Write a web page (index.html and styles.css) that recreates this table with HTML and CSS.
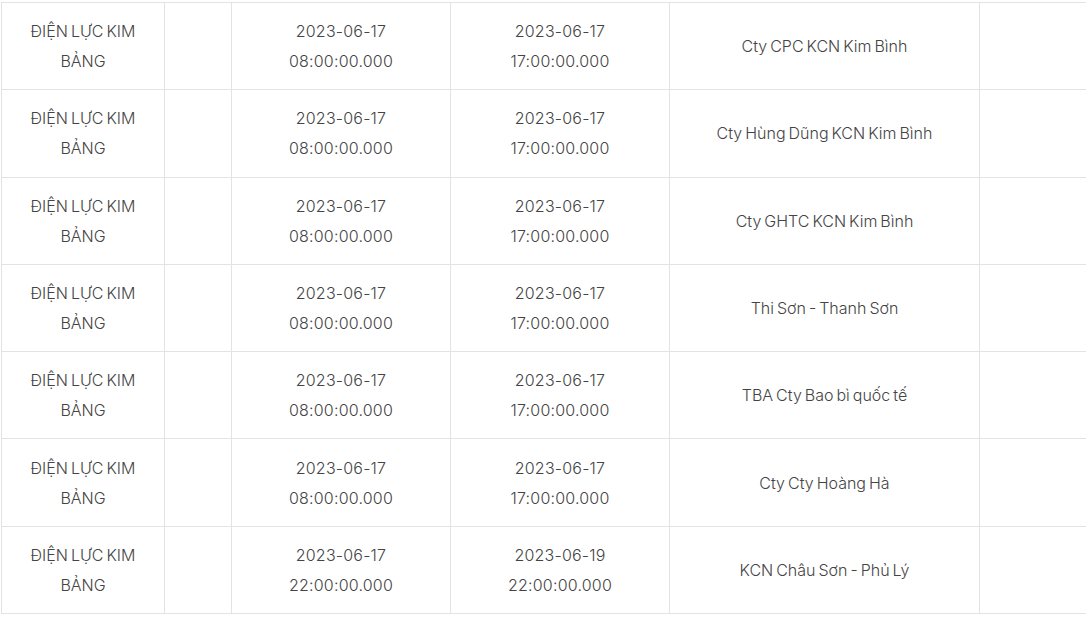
FILE: index.html
```html
<!DOCTYPE html>
<html lang="vi">
<head>
<meta charset="utf-8">
<link rel="stylesheet" href="styles.css">
</head>
<body>
<div class="wrap">
<table class="outage">
  <colgroup>
    <col class="c1"><col class="c2"><col class="c3"><col class="c4"><col class="c5"><col class="c6">
  </colgroup>
  <tbody>
    <tr><td>ĐIỆN LỰC KIM<br>BẢNG</td><td></td><td class="dt">2023-06-17<br>08:00:00.000</td><td class="dt">2023-06-17<br>17:00:00.000</td><td>Cty CPC KCN Kim Bình</td><td></td></tr>
    <tr><td>ĐIỆN LỰC KIM<br>BẢNG</td><td></td><td class="dt">2023-06-17<br>08:00:00.000</td><td class="dt">2023-06-17<br>17:00:00.000</td><td>Cty Hùng Dũng KCN Kim Bình</td><td></td></tr>
    <tr><td>ĐIỆN LỰC KIM<br>BẢNG</td><td></td><td class="dt">2023-06-17<br>08:00:00.000</td><td class="dt">2023-06-17<br>17:00:00.000</td><td>Cty GHTC KCN Kim Bình</td><td></td></tr>
    <tr><td>ĐIỆN LỰC KIM<br>BẢNG</td><td></td><td class="dt">2023-06-17<br>08:00:00.000</td><td class="dt">2023-06-17<br>17:00:00.000</td><td>Thi Sơn - Thanh Sơn</td><td></td></tr>
    <tr><td>ĐIỆN LỰC KIM<br>BẢNG</td><td></td><td class="dt">2023-06-17<br>08:00:00.000</td><td class="dt">2023-06-17<br>17:00:00.000</td><td>TBA Cty Bao bì quốc tế</td><td></td></tr>
    <tr><td>ĐIỆN LỰC KIM<br>BẢNG</td><td></td><td class="dt">2023-06-17<br>08:00:00.000</td><td class="dt">2023-06-17<br>17:00:00.000</td><td>Cty Cty Hoàng Hà</td><td></td></tr>
    <tr><td>ĐIỆN LỰC KIM<br>BẢNG</td><td></td><td class="dt">2023-06-17<br>22:00:00.000</td><td class="dt">2023-06-19<br>22:00:00.000</td><td>KCN Châu Sơn - Phủ Lý</td><td></td></tr>
  </tbody>
</table>
</div>
</body>
</html>
```
FILE: styles.css
```css
html, body {
  margin: 0;
  padding: 0;
  background: #fff;
}
.wrap {
  padding: 2px 0 0 1px;
  height: 615px;
  overflow: hidden;
}
.outage {
  border-collapse: collapse;
  table-layout: fixed;
  width: 1200px;
  font-family: Inter, "Noto Sans", sans-serif;
  font-size: 16px;
  font-weight: 300;
  line-height: 30px;
  color: #444;
  word-spacing: -1.5px;
}
.c1 { width: 163px; }
.c2 { width: 67px; }
.c3 { width: 219px; }
.c4 { width: 219px; }
.c5 { width: 310px; }
.c6 { width: 222px; }
.outage td {
  border: 1px solid #e3e3e3;
  text-align: center;
  vertical-align: middle;
  padding: 13.15px 4px;
  height: 60px;
}
.outage td.dt {
  letter-spacing: 0.2px;
}
```
